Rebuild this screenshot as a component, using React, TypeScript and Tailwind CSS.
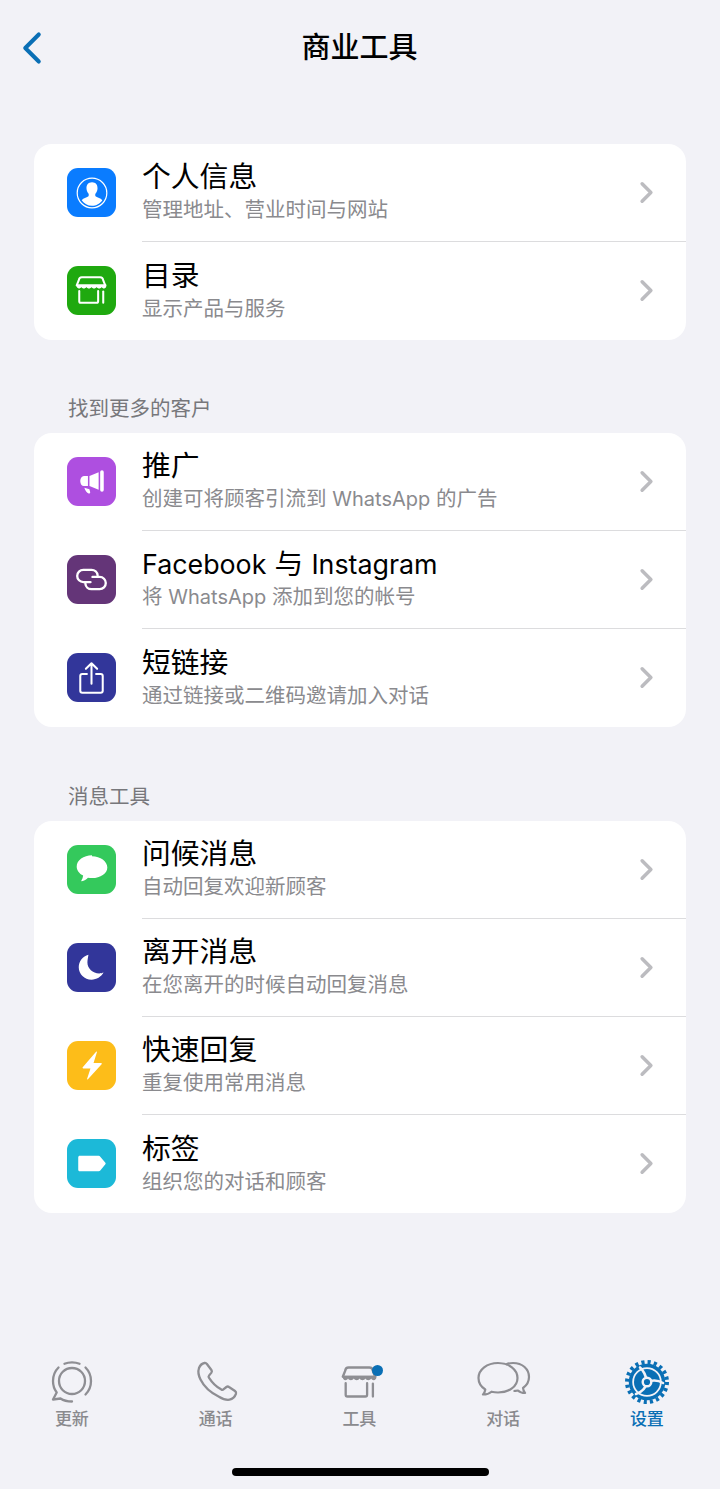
import type { ReactNode } from "react";
import { ChevronLeft, ChevronRight } from "lucide-react";

type RowItem = {
  title: ReactNode;
  sub: ReactNode;
  bg: string;
  icon: ReactNode;
};

const ProfileIcon = (
  <svg viewBox="0 0 48 48" className="h-full w-full">
    <circle cx="24.500" cy="24.500" r="14.500" fill="none" stroke="#fff" strokeWidth="1.200" />
    <path
      d="M24.500 14c-3.800 0-5.600 2.700-5.400 6 .1 2 .8 3.800 1.900 5 .5.600.5 2.400-.3 3-1.700 1.200-4.500 1.600-6.300 3.500 2.300 3.300 6 5.500 10.100 5.500s7.900-2.200 10.100-5.500c-1.800-1.900-4.600-2.300-6.300-3.500-.8-.6-.8-2.400-.3-3 1.100-1.200 1.800-3 1.900-5 .2-3.300-1.600-6-5.400-6z"
      fill="#fff"
    />
  </svg>
);

const StoreIcon = ({ color = "#fff", box = "0 0 48 48" }: { color?: string; box?: string }) => (
  <svg viewBox={box} className="h-full w-full">
    <path
      d="M11.500 14c.3-2 1.500-3 3-3h18c1.500 0 2.700 1 3 3l2 5H9.500z"
      fill="none"
      stroke={color}
      strokeWidth="2"
      strokeLinejoin="round"
    />
    <path
      d="M9 18h29.500v1.500c0 1.500-1 2.500-2.200 2.500-1 0-1.800-.6-2.300-1.500-.5.900-1.500 1.500-2.500 1.500s-2-.6-2.500-1.500c-.5.900-1.500 1.500-2.500 1.500s-2-.6-2.500-1.500c-.5.900-1.500 1.500-2.500 1.500s-2-.6-2.500-1.500c-.5.900-1.500 1.500-2.500 1.500s-2-.6-2.500-1.500c-.5.900-1.300 1.500-2.300 1.500-1.200 0-2.200-1-2.200-2.500z"
      fill={color}
    />
    <path
      d="M12 24.500v10c0 1 .7 1.500 1.500 1.500H29c.9 0 1.500-.5 1.500-1.500v-10"
      fill="none"
      stroke={color}
      strokeWidth="2"
      strokeLinecap="round"
    />
    <path d="M35.500 25v11" fill="none" stroke={color} strokeWidth="2" strokeLinecap="round" />
  </svg>
);

const MegaphoneIcon = (
  <svg viewBox="0 0 48 48" className="h-full w-full">
    <rect x="32.500" y="13" width="3.500" height="21" rx="1.700" fill="#fff" />
    <path d="M31 15v17l-9-3.500v-10z" fill="#fff" />
    <path d="M20.500 18.500v10h-4c-2 0-3.500-2.200-3.500-5s1.500-5 3.500-5z" fill="#fff" />
    <path d="M17 30l5 1.500.7 3c.2 1-.8 1.500-1.500 1.300-1.700-.7-3.400-3-4.200-5.800z" fill="#fff" />
  </svg>
);

const LinkIcon = (
  <svg viewBox="0 0 48 48" className="h-full w-full" fill="none" stroke="#fff" strokeWidth="2.300" strokeLinecap="round">
    <path d="M23 26.500h-7a6 6 0 0 1 0-12h8a6 6 0 0 1 6 5.500" />
    <path d="M25 21.500h7a6 6 0 0 1 0 12h-8a6 6 0 0 1-6-5.500" />
  </svg>
);

const ShareIcon = (
  <svg viewBox="0 0 48 48" className="h-full w-full" fill="none" stroke="#fff" strokeWidth="2" strokeLinecap="round" strokeLinejoin="round">
    <path d="M19.500 20.500H15c-1.200 0-2 .8-2 2V37c0 1.200.8 2 2 2h18c1.200 0 2-.8 2-2V22.500c0-1.200-.8-2-2-2h-4.500" />
    <path d="M24 30V10.500M18.500 15.500L24 10l5.500 5.500" />
  </svg>
);

const BubbleIcon = (
  <svg viewBox="0 0 48 48" className="h-full w-full">
    <path
      d="M24.500 10c-8.300 0-15 4.900-15 11 0 3.700 2.500 7 6.300 8.900-.2 1.800-.8 3.500-1.700 4.900-.3.400 0 .8.400.7 2.300-.3 4.500-2 6-3.500 1.400.3 2.500.4 4 .4 8.300 0 15-4.400 15-10.400s-6.700-11-15-11z"
      fill="#fff"
    />
  </svg>
);

const MoonIcon = (
  <svg viewBox="0 0 48 48" className="h-full w-full">
    <path
      d="M21 11.500c-5.500 1.500-9.500 6.300-9.500 12.300 0 6.800 5.600 12.200 12.500 12.200 5 0 9.500-2.900 11.800-7-1.100.5-2.800.9-4.300.9-6.200 0-11.500-4.900-11.500-10.700 0-2.900.7-5.500 1-7.700z"
      fill="#fff"
    />
  </svg>
);

const BoltIcon = (
  <svg viewBox="0 0 48 48" className="h-full w-full">
    <path
      d="M28.500 10.500c.4-.6 1-.2.8.4L26 21.500h7.300c.7 0 1 .6.600 1.200L20.500 37.500c-.4.600-1 .2-.8-.4L23 27h-7c-.7 0-1-.6-.6-1.200z"
      fill="#fff"
    />
  </svg>
);

const TagIcon = (
  <svg viewBox="0 0 48 48" className="h-full w-full">
    <path
      d="M11 18c0-.9.700-1.500 1.500-1.500H31c.7 0 1.200.3 1.600.8l5 6c.4.500.4 1 0 1.500l-5 6c-.4.500-.9.800-1.600.8H12.500c-.8 0-1.500-.6-1.500-1.500z"
      fill="#fff"
    />
  </svg>
);

const GROUP_ONE: RowItem[] = [
  { title: "个人信息", sub: "管理地址、营业时间与网站", bg: "bg-[#0a7cff]", icon: ProfileIcon },
  { title: "目录", sub: "显示产品与服务", bg: "bg-[#1fa90f]", icon: <StoreIcon /> },
];

const GROUP_TWO: RowItem[] = [
  {
    title: "推广",
    sub: (
      <>
        创建可将顾客引流到 <span className="text-[20px]">WhatsApp</span> 的广告
      </>
    ),
    bg: "bg-[#ae4fe0]",
    icon: MegaphoneIcon,
  },
  {
    title: (
      <>
        <span className="text-[26.800px]">Facebook</span> 与 <span className="text-[26.800px]">Instagram</span>
      </>
    ),
    sub: (
      <>
        将 <span className="text-[20px]">WhatsApp</span> 添加到您的帐号
      </>
    ),
    bg: "bg-[#643578]",
    icon: LinkIcon,
  },
  { title: "短链接", sub: "通过链接或二维码邀请加入对话", bg: "bg-[#32369a]", icon: ShareIcon },
];

const GROUP_THREE: RowItem[] = [
  { title: "问候消息", sub: "自动回复欢迎新顾客", bg: "bg-[#34c95c]", icon: BubbleIcon },
  { title: "离开消息", sub: "在您离开的时候自动回复消息", bg: "bg-[#32369a]", icon: MoonIcon },
  { title: "快速回复", sub: "重复使用常用消息", bg: "bg-[#fdbd19]", icon: BoltIcon },
  { title: "标签", sub: "组织您的对话和顾客", bg: "bg-[#1cb9d8]", icon: TagIcon },
];

function Row({ item, last }: { item: RowItem; last: boolean }) {
  return (
    <div className="flex h-[98px] items-center pl-[33px]">
      <div className={`-mt-px h-[49px] w-[49px] shrink-0 rounded-[11px] ${item.bg}`}>{item.icon}</div>
      <div
        className={`ml-[26px] flex h-full min-w-0 flex-1 items-center pr-[22.500px] ${
          last ? "" : "border-b border-[#dcdcde]"
        }`}
      >
        <div className="flex-1 pb-[3px]">
          <div className="h-[36px] text-[28.800px] leading-[36px] text-black">{item.title}</div>
          <div className="mt-[2px] h-[26px] text-[20.500px] leading-[26px] text-[#8a8a8e]">{item.sub}</div>
        </div>
        <ChevronRight className="-mt-px h-[35px] w-[35px] text-[#bcbcc0]" strokeWidth={2.400} />
      </div>
    </div>
  );
}

function Group({ label, items, className = "" }: { label?: string; items: RowItem[]; className?: string }) {
  return (
    <section className={className}>
      {label && <div className="mb-[11px] pl-[34px] text-[20.500px] leading-[26px] text-[#77777b]">{label}</div>}
      <div className="overflow-hidden rounded-[18px] bg-white">
        {items.map((item, i) => (
          <Row key={i} item={item} last={i === items.length - 1} />
        ))}
      </div>
    </section>
  );
}

const GREY = "#8e8e93";

function TabIcon({ name }: { name: string }) {
  if (name === "更新") {
    return (
      <svg viewBox="0 0 44 44" className="h-11 w-11" fill="none" stroke={GREY} strokeWidth="2.300" strokeLinecap="round" strokeLinejoin="round">
        <circle cx="22" cy="21" r="13" />
        <path d="M14.500 3.800C17 2.700 19.500 2.300 22 2.300s5 .4 7.500 1.500" />
        <path d="M35.500 7.500C39 11 41 15.500 41 21s-2 10-5.500 13.500" />
        <path d="M8.500 7.500C5 11 3 15.500 3 21c0 4.500 1.300 8.300 3.700 11.500L3 39.500l7.500-1c3 2 7 3 11.500 3" strokeDasharray="60 4" />
      </svg>
    );
  }
  if (name === "通话") {
    return (
      <svg viewBox="0 0 44 44" className="h-11 w-11" fill="none" stroke={GREY} strokeWidth="2.300" strokeLinejoin="round">
        <path d="M5 8c1-2.500 3-4.500 5.500-5 1-.2 1.800.2 2.400 1l4.500 6c.6.800.6 1.800 0 2.600l-2.400 3c-.5.600-.5 1.400-.1 2 3.500 5.500 7 9 12.500 12 .7.300 1.500.3 2-.2l3-2.400c.8-.6 1.800-.6 2.600 0l6 4c1 .7 1.300 1.700 1 2.700-1 3-3.800 5.500-6.500 6-3 .5-6.500-.5-10.500-3C16 32.500 10 26.500 6.500 19.500 4.500 15.500 4 11 5 8z" />
      </svg>
    );
  }
  if (name === "工具") {
    return (
      <div className="relative h-11 w-11">
        <StoreIcon color={GREY} box="4.500 4.500 38 38" />
        <span className="absolute right-[-2px] top-[5px] h-[11px] w-[11px] rounded-full bg-[#0a6fb5]" />
      </div>
    );
  }
  if (name === "对话") {
    return (
      <svg viewBox="0 0 56 44" className="h-11 w-14" fill="none" stroke={GREY} strokeWidth="2.200" strokeLinejoin="round">
        <path d="M31 4.500c2-1 4.500-1.500 7-1.500 9.500 0 16 6 16 14 0 4.500-2.500 8.500-6 11 .2 2 1 3.700 2 5-3 0-5.500-1-7-2.500-1.500.3-3 .5-4.500.5" />
        <path d="M23 3C12 3 3.500 9.500 3.500 18c0 5 2.800 9 6.800 11.500-.3 2-1 3.700-2.300 5 3.500 0 6.500-1 8.500-2.800 2 .5 4 .8 6.500.8 11 0 19.500-6 19.500-14.500S34 3 23 3z" />
      </svg>
    );
  }
  return (
    <svg viewBox="0 0 44 44" className="h-11 w-11">
      <circle cx="22" cy="22" r="20" fill="none" stroke="#0a6fb5" strokeWidth="4" strokeDasharray="3.140 3.143" />
      <circle cx="22" cy="22" r="16.500" fill="#f2f2f7" stroke="#0a6fb5" strokeWidth="3.500" />
      <circle cx="22" cy="22" r="13" fill="#0a6fb5" />
      <g stroke="#f2f2f7" strokeWidth="2.600" strokeLinecap="round" fill="none">
        <path d="M22 22C21 16 19 11 15 7.500" />
        <path d="M22 22C27 20 33 20 38 23" />
        <path d="M22 22C21 27 17 32 11 34" />
      </g>
      <circle cx="22" cy="22" r="4.300" fill="#0a6fb5" stroke="#f2f2f7" strokeWidth="2.400" />
    </svg>
  );
}

const TABS = ["更新", "通话", "工具", "对话", "设置"];

export default function App() {
  return (
    <div
      className="flex h-[1489px] w-[720px] flex-col overflow-hidden bg-[#f2f2f7]"
      style={{ fontFamily: 'Inter, "Noto Sans CJK SC", sans-serif' }}
    >
      {/* Header */}
      <header className="relative flex h-[96px] shrink-0 items-center justify-center pb-[2px] pr-px">
        <ChevronLeft className="absolute left-[4.500px] top-[20.500px] h-[54px] w-[54px] text-[#0a6fb5]" strokeWidth={1.800} />
        <h1 className="text-[29px] font-medium leading-none text-black">商业工具</h1>
      </header>

      {/* Settings groups */}
      <main className="flex flex-1 flex-col gap-[56px] px-[34px] pt-[48px]">
        <Group items={GROUP_ONE} />
        <Group label="找到更多的客户" items={GROUP_TWO} />
        <Group label="消息工具" items={GROUP_THREE} className="mt-px" />
      </main>

      {/* Tab bar */}
      <nav className="flex shrink-0">
        {TABS.map((tab) => {
          const active = tab === "设置";
          return (
            <div key={tab} className="flex w-[143.750px] flex-col items-center">
              <div className="flex h-11 items-center justify-center">
                <TabIcon name={tab} />
              </div>
              <span
                className={`mt-[4px] text-[17px] font-medium leading-[22px] ${
                  active ? "text-[#0a6fb5]" : "text-[#8a8a8e]"
                }`}
              >
                {tab}
              </span>
            </div>
          );
        })}
      </nav>

      {/* Home indicator */}
      <div className="flex h-[59px] shrink-0 items-start justify-center pt-[38px]">
        <div className="h-2 w-[257px] rounded-full bg-black" />
      </div>
    </div>
  );
}
